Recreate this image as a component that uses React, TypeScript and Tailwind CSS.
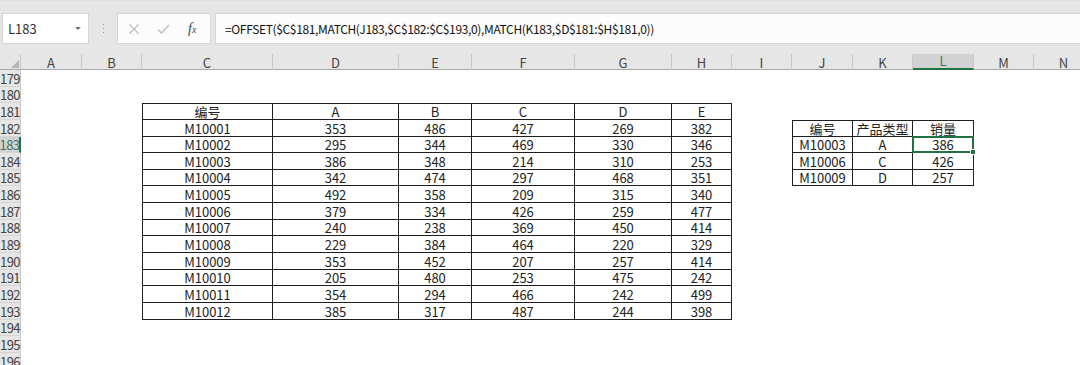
import clsx from "clsx";

const columns = ["A", "B", "C", "D", "E", "F", "G", "H", "I", "J", "K", "L", "M", "N"];

const firstRow = 179;
const lastRow = 196;

const codes = [
  ["编号", "A", "B", "C", "D", "E"],
  ["M10001", "353", "486", "427", "269", "382"],
  ["M10002", "295", "344", "469", "330", "346"],
  ["M10003", "386", "348", "214", "310", "253"],
  ["M10004", "342", "474", "297", "468", "351"],
  ["M10005", "492", "358", "209", "315", "340"],
  ["M10006", "379", "334", "426", "259", "477"],
  ["M10007", "240", "238", "369", "450", "414"],
  ["M10008", "229", "384", "464", "220", "329"],
  ["M10009", "353", "452", "207", "257", "414"],
  ["M10010", "205", "480", "253", "475", "242"],
  ["M10011", "354", "294", "466", "242", "499"],
  ["M10012", "385", "317", "487", "244", "398"],
];

const lookup = [
  ["编号", "产品类型", "销量"],
  ["M10003", "A", "386"],
  ["M10006", "C", "426"],
  ["M10009", "D", "257"],
];

// which table (if any) a cell belongs to, col is 0-based (A = 0)
const cellAt = (row: number, col: number) => {
  if (row >= 181 && row <= 193 && col >= 2 && col <= 7) {
    return { text: codes[row - 181][col - 2], left: col === 2, top: row === 181 };
  }
  if (row >= 182 && row <= 185 && col >= 9 && col <= 11) {
    return { text: lookup[row - 182][col - 9], left: col === 9, top: row === 182 };
  }
  return null;
};

const gridCols =
  "grid grid-cols-[21px_61px_60px_131px_126px_73px_103px_97px_60px_60px_61px_60px_61px_60px_60px]";

const Toolbar = () => (
  <div className="h-[54px] bg-[#e6e6e6] flex flex-col">
    <div className="h-[3px] bg-[#dedede] border-b border-[#ededed]" />
    <div className="flex items-start pt-[10px]">
      {/* name box */}
      <div className="ml-[2px] w-[87px] h-[31px] bg-white border border-[#d6d6d6] flex items-center justify-between pl-[5px] pr-[7px]">
        <span className="text-[13px] text-[#333]">L183</span>
        <span className="w-0 h-0 border-l-[3px] border-r-[3px] border-t-[3px] border-l-transparent border-r-transparent border-t-[#707070]" />
      </div>
      <div className="w-[28px] h-[31px] flex flex-col items-center justify-center gap-[3px]">
        <span className="w-[1px] h-[1px] bg-[#9a9a9a]" />
        <span className="w-[1px] h-[1px] bg-[#9a9a9a]" />
        <span className="w-[1px] h-[1px] bg-[#9a9a9a]" />
      </div>
      {/* cancel / enter / fx */}
      <div className="w-[94px] h-[31px] bg-[#fcfcfc] border border-[#d6d6d6] flex items-center pl-[10px] gap-[16px]">
        <svg width="12" height="12" viewBox="0 0 12 12" className="mr-[1px]">
          <path d="M1.5 1.5 L10.5 10.5 M10.5 1.5 L1.5 10.5" stroke="#bcbcbc" strokeWidth="1.3" fill="none" />
        </svg>
        <svg width="13" height="12" viewBox="0 0 13 12">
          <path d="M1 6.5 L4.5 10 L12 2" stroke="#bcbcbc" strokeWidth="1.3" fill="none" />
        </svg>
        <span className="font-['Liberation_Serif',serif] italic text-[14px] text-[#444] leading-none ml-[2px]">
          f<span className="text-[10px]">x</span>
        </span>
      </div>
      {/* formula */}
      <div className="ml-[4px] flex-1 h-[31px] bg-[#fcfcfc] border-y border-l border-[#d6d6d6] flex items-center pl-[9px]">
        <span className="text-[12px] tracking-[-0.35px] text-[#111] whitespace-nowrap">
          =OFFSET($C$181,MATCH(J183,$C$182:$C$193,0),MATCH(K183,$D$181:$H$181,0))
        </span>
      </div>
    </div>
  </div>
);

const ColumnHeaders = () => (
  <div className={clsx(gridCols, "h-[16px] bg-[#e6e6e6] border-b border-[#a8a8a8]")}>
    <div className="relative border-r border-[#c8c8c8]">
      <svg width="8" height="8" viewBox="0 0 8 8" className="absolute right-[1px] bottom-[2px]">
        <path d="M8 0 L8 8 L0 8 Z" fill="#b4b4b4" />
      </svg>
    </div>
    {columns.map((c) => (
      <div
        key={c}
        className={clsx(
          "flex items-end justify-center leading-none text-[13px] pb-[1px] border-r border-[#c8c8c8]",
          c === "L" ? "bg-[#d2d2d2] text-[#3d7a5a] border-b-2 border-b-[#217346]" : "text-[#444]"
        )}
      >
        {c}
      </div>
    ))}
  </div>
);

const SheetRow = ({ row }: { row: number }) => {
  const selectedRow = row === 183;
  return (
    <div className={clsx(gridCols, "h-[16.65px]")}>
      <div
        className={clsx(
          "flex items-end justify-center leading-none text-[13px] tracking-[-0.6px] pb-[1px] border-b border-[#d4d4d4]",
          selectedRow
            ? "bg-[#d2d2d2] text-[#3d7a5a] border-r-2 border-r-[#217346]"
            : "bg-[#e6e6e6] text-[#444] border-r border-r-[#c8c8c8]"
        )}
      >
        {row}
      </div>
      {columns.map((c, col) => {
        const cell = cellAt(row, col);
        const selected = row === 183 && c === "L";
        return (
          <div
            key={c}
            className={clsx(
              "relative flex items-end justify-center leading-none text-[13px] text-[#222] pb-[1px] whitespace-nowrap",
              cell && "border-r border-b border-[#1e1e1e]",
              cell?.left && "border-l",
              cell?.top && "border-t"
            )}
          >
            {cell?.text}
            {selected && (
              <div className="absolute z-10 -left-[1px] -top-[1px] -right-[1px] -bottom-[1px] border-2 border-[#217346]">
                <div className="absolute -right-[4px] -bottom-[4px] w-[6px] h-[6px] bg-[#217346] border border-white" />
              </div>
            )}
          </div>
        );
      })}
    </div>
  );
};

export default function App() {
  const rows = Array.from({ length: lastRow - firstRow + 1 }, (_, i) => firstRow + i);
  return (
    <div className="w-[1080px] h-[365px] overflow-hidden bg-white font-['Noto_Sans_CJK_SC',sans-serif]">
      <Toolbar />
      <ColumnHeaders />
      {rows.map((r) => (
        <SheetRow key={r} row={r} />
      ))}
    </div>
  );
}
